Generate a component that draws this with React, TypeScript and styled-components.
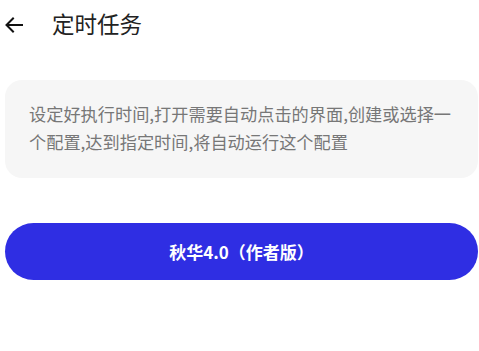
import * as React from 'react'
import styled, { createGlobalStyle } from 'styled-components'

const GlobalStyle = createGlobalStyle`
  html, body {
    margin: 0;
    padding: 0;
    background: #ffffff;
  }
  body {
    font-family: "Noto Sans CJK SC", "Noto Sans", sans-serif;
  }
`

const Page = styled.div`
  display: flex;
  flex-direction: column;
  padding: 0 1px 0 5px;
  width: 479px;
  box-sizing: border-box;
`

const Header = styled.header`
  align-items: center;
  display: flex;
  height: 50px;
  gap: 29px;
`

const BackButton = styled.button`
  align-items: center;
  background: none;
  border: none;
  display: flex;
  height: 24px;
  justify-content: center;
  padding: 0;
  width: 18px;
`

const Title = styled.h1`
  color: #222222;
  font-size: 22.5px;
  font-weight: 400;
  line-height: 1;
  margin: 0 0 4px;
`

const Card = styled.div`
  background: #f6f6f6;
  border-radius: 17px;
  color: #777777;
  font-size: 17.2px;
  line-height: 28px;
  margin-top: 30px;
  padding: 20px 20px 22px 24px;
`

const StartButton = styled.button`
  background: #2f2ee3;
  border: none;
  border-radius: 29px;
  color: #ffffff;
  font-family: "Noto Sans CJK SC", "Noto Sans", sans-serif;
  font-size: 17px;
  font-weight: 700;
  height: 57px;
  margin-top: 45px;
  width: 100%;
`

export default function App() {
  return (
    <>
      <GlobalStyle />
      <Page>
        <Header>
          <BackButton>
            <svg width="18" height="16" viewBox="0 0 18 16" fill="none" stroke="#111" strokeWidth="2" strokeLinecap="square">
              <path d="M17 8H2" />
              <path d="M8 1.5L1.5 8L8 14.5" />
            </svg>
          </BackButton>
          <Title>定时任务</Title>
        </Header>
        <Card>
          设定好执行时间,打开需要自动点击的界面,创建或选择一个配置,达到指定时间,将自动运行这个配置
        </Card>
        <StartButton>秋华4.0（作者版）</StartButton>
      </Page>
    </>
  )
}
